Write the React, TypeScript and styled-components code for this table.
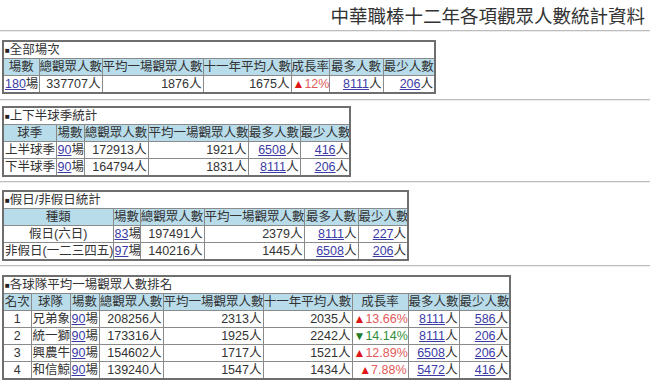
import React from 'react';
import styled, { createGlobalStyle } from 'styled-components';

const GlobalStyle = createGlobalStyle`
  html, body {
    margin: 0;
    padding: 0;
    background: #fff;
  }
  body {
    font-family: 'Liberation Sans', 'Noto Sans CJK TC', sans-serif;
    color: #333;
  }
`;

type Trend = 'up' | 'down';
type Align = 'left' | 'center' | 'right';

// td with a fixed line box, so mixed latin/CJK runs don't grow the row
function Cell({ align, children }: { align?: Align; children: React.ReactNode }) {
  return (
    <Td $align={align}>
      <Fit>{children}</Fit>
    </Td>
  );
}

function Fans({ n, link }: { n: string; link?: boolean }) {
  return (
    <>
      {link ? <Link>{n}</Link> : n}人
    </>
  );
}

function Games({ n }: { n: string }) {
  return (
    <>
      <Link>{n}</Link>場
    </>
  );
}

function Growth({ trend, value }: { trend: Trend; value: string }) {
  return (
    <GrowthText $trend={trend}>
      <Arrow $trend={trend}>{trend === 'up' ? '▲' : '▼'}</Arrow>
      {value}
    </GrowthText>
  );
}

function StatsTable({
  title,
  cols,
  children,
}: {
  title: string;
  cols: [string, number][];
  children: React.ReactNode;
}) {
  const total = cols.reduce((s, [, w]) => s + w, 0);
  return (
    <StatTable style={{ width: total }}>
      <colgroup>
        {cols.map(([label, w]) => (
          <Col key={label} $w={w} />
        ))}
      </colgroup>
      <tbody>
        <tr>
          <CaptionCell colSpan={cols.length}>
            <Fit>
              <Bullet>■</Bullet>
              {title}
            </Fit>
          </CaptionCell>
        </tr>
        <tr>
          {cols.map(([label]) => (
            <HeadCell key={label}>
              <Fit>{label}</Fit>
            </HeadCell>
          ))}
        </tr>
        {children}
      </tbody>
    </StatTable>
  );
}

const teams = [
  { rank: '1', name: '兄弟象', total: '208256', avg: '2313', prev: '2035', trend: 'up' as Trend, rate: '13.66%', max: '8111', min: '586' },
  { rank: '2', name: '統一獅', total: '173316', avg: '1925', prev: '2242', trend: 'down' as Trend, rate: '14.14%', max: '8111', min: '206' },
  { rank: '3', name: '興農牛', total: '154602', avg: '1717', prev: '1521', trend: 'up' as Trend, rate: '12.89%', max: '6508', min: '206' },
  { rank: '4', name: '和信鯨', total: '139240', avg: '1547', prev: '1434', trend: 'up' as Trend, rate: '7.88%', max: '5472', min: '416' },
];

export default function App() {
  return (
    <Page>
      <GlobalStyle />
      <PageTitle>中華職棒十二年各項觀眾人數統計資料</PageTitle>
      <Rule />

      <Section $top={8} $bottom={5}>
        <StatsTable
          title="全部場次"
          cols={[
            ['場數', 36],
            ['總觀眾人數', 63],
            ['平均一場觀眾人數', 101],
            ['十一年平均人數', 88],
            ['成長率', 38],
            ['最多人數', 54],
            ['最少人數', 52],
          ]}
        >
          <tr>
            <Cell><Games n="180" /></Cell>
            <Cell align="right"><Fans n="337707" /></Cell>
            <Cell align="right"><Fans n="1876" /></Cell>
            <Cell align="right"><Fans n="1675" /></Cell>
            <Cell align="right"><Growth trend="up" value="12%" /></Cell>
            <Cell align="right"><Fans n="8111" link /></Cell>
            <Cell align="right"><Fans n="206" link /></Cell>
          </tr>
        </StatsTable>
      </Section>
      <Rule />

      <Section $top={5} $bottom={4}>
        <StatsTable
          title="上下半球季統計"
          cols={[
            ['球季', 53],
            ['場數', 28],
            ['總觀眾人數', 64],
            ['平均一場觀眾人數', 100],
            ['最多人數', 52],
            ['最少人數', 50],
          ]}
        >
          <tr>
            <Cell>上半球季</Cell>
            <Cell><Games n="90" /></Cell>
            <Cell align="right"><Fans n="172913" /></Cell>
            <Cell align="right"><Fans n="1921" /></Cell>
            <Cell align="right"><Fans n="6508" link /></Cell>
            <Cell align="right"><Fans n="416" link /></Cell>
          </tr>
          <tr>
            <Cell>下半球季</Cell>
            <Cell><Games n="90" /></Cell>
            <Cell align="right"><Fans n="164794" /></Cell>
            <Cell align="right"><Fans n="1831" /></Cell>
            <Cell align="right"><Fans n="8111" link /></Cell>
            <Cell align="right"><Fans n="206" link /></Cell>
          </tr>
        </StatsTable>
      </Section>
      <Rule />

      <Section $top={7} $bottom={4}>
        <StatsTable
          title="假日/非假日統計"
          cols={[
            ['種類', 110],
            ['場數', 27],
            ['總觀眾人數', 64],
            ['平均一場觀眾人數', 100],
            ['最多人數', 54],
            ['最少人數', 50],
          ]}
        >
          <tr>
            <Cell align="center">假日(六日)</Cell>
            <Cell><Games n="83" /></Cell>
            <Cell align="right"><Fans n="197491" /></Cell>
            <Cell align="right"><Fans n="2379" /></Cell>
            <Cell align="right"><Fans n="8111" link /></Cell>
            <Cell align="right"><Fans n="227" link /></Cell>
          </tr>
          <tr>
            <Cell align="center">非假日(一二三四五)</Cell>
            <Cell><Games n="97" /></Cell>
            <Cell align="right"><Fans n="140216" /></Cell>
            <Cell align="right"><Fans n="1445" /></Cell>
            <Cell align="right"><Fans n="6508" link /></Cell>
            <Cell align="right"><Fans n="206" link /></Cell>
          </tr>
        </StatsTable>
      </Section>
      <Rule />

      <Section $top={8} $bottom={0}>
        <StatsTable
          title="各球隊平均一場觀眾人數排名"
          cols={[
            ['名次', 28],
            ['球隊', 39],
            ['場數', 29],
            ['總觀眾人數', 64],
            ['平均一場觀眾人數', 100],
            ['十一年平均人數', 89],
            ['成長率', 56],
            ['最多人數', 51],
            ['最少人數', 51],
          ]}
        >
          {teams.map((t) => (
            <tr key={t.rank}>
              <Cell align="center">{t.rank}</Cell>
              <Cell>{t.name}</Cell>
              <Cell><Games n="90" /></Cell>
              <Cell align="right"><Fans n={t.total} /></Cell>
              <Cell align="right"><Fans n={t.avg} /></Cell>
              <Cell align="right"><Fans n={t.prev} /></Cell>
              <Cell align="right"><Growth trend={t.trend} value={t.rate} /></Cell>
              <Cell align="right"><Fans n={t.max} link /></Cell>
              <Cell align="right"><Fans n={t.min} link /></Cell>
            </tr>
          ))}
        </StatsTable>
      </Section>
    </Page>
  );
}

const Page = styled.div`
  width: 650px;
  height: 386px;
  overflow: hidden;
`;

const PageTitle = styled.h1`
  margin: 0;
  padding-right: 5px;
  height: 30px;
  line-height: 30px;
  font-size: 18.5px;
  font-weight: normal;
  text-align: right;
  color: #333;
  font-family: 'Noto Sans CJK TC', sans-serif;
`;

const Rule = styled.div`
  height: 1px;
  background: #bdbdbd;
  border-bottom: 1px solid #ececec;
`;

const Section = styled.div<{ $top: number; $bottom: number }>`
  padding: ${({ $top }) => $top}px 0 ${({ $bottom }) => $bottom}px 2px;
`;

const StatTable = styled.table`
  table-layout: fixed;
  border-collapse: collapse;
  border: 2px solid #6e6e6e;
  font-size: 12.5px;
  color: #333;
`;

const Col = styled.col<{ $w: number }>`
  width: ${({ $w }) => $w}px;
`;

const Fit = styled.div`
  height: 16px;
  line-height: 16px;
  white-space: nowrap;
  overflow: visible;
`;

const CaptionCell = styled.td`
  padding: 0 1px;
  border: 1px solid #8a8a8a;
  background: #fff;
`;

const Bullet = styled.span`
  font-size: 8px;
  vertical-align: 1px;
  color: #222;
`;

const HeadCell = styled.th`
  padding: 0;
  border: 1px solid #8a8a8a;
  background: #b8dcea;
  font-weight: normal;
  text-align: center;
  overflow: hidden;
  color: #333;
`;

const Td = styled.td<{ $align?: Align }>`
  padding: 0 1px;
  border: 1px solid #8a8a8a;
  text-align: ${({ $align }) => $align || 'left'};
  overflow: hidden;
`;

const Link = styled.a`
  color: #3b3ba6;
  text-decoration: underline;
  cursor: pointer;
`;

const GrowthText = styled.span<{ $trend: Trend }>`
  color: ${({ $trend }) => ($trend === 'up' ? '#e25a5a' : '#2f8f3a')};
`;

const Arrow = styled.span<{ $trend: Trend }>`
  color: ${({ $trend }) => ($trend === 'up' ? '#e01515' : '#1f7a2a')};
  font-size: 12px;
`;
